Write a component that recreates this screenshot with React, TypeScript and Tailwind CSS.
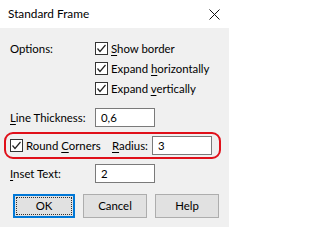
import React from "react";

const Check = () => (
  <span className="flex h-[13px] w-[13px] shrink-0 items-center justify-center border border-[#333333] bg-white">
    <svg width="11" height="11" viewBox="0 0 11 11">
      <polyline points="1.5,5.5 4,8.5 9.5,2" fill="none" stroke="#222222" strokeWidth="1.2" />
    </svg>
  </span>
);

const Field = ({ value, width = "w-[60px]" }: { value: string; width?: string }) => (
  <div className={`${width} flex h-[19px] items-center border border-[#7a7a7a] bg-white pl-[5px]`}>{value}</div>
);

const Key = ({ k }: { k: string }) => <span className="underline underline-offset-2">{k}</span>;

const App = () => {
  return (
    <div className="h-[227px] w-[229px] overflow-hidden bg-[#f0f0f0] font-['Segoe_UI','Lato',sans-serif] text-[11.4px] leading-none text-black">
      <div className="flex h-[28px] items-center justify-between bg-white pl-[8px] pr-[9px] text-[11.8px]">
        <span>Standard Frame</span>
        <svg width="11" height="11" viewBox="0 0 11 11">
          <path d="M0.5 0.5 L10.5 10.5 M10.5 0.5 L0.5 10.5" stroke="#111111" strokeWidth="1" />
        </svg>
      </div>

      <div className="pl-[10px] pt-[14px]">
        <div className="flex">
          <div className="w-[85px] pt-[1px]">Options:</div>
          <div className="flex flex-col gap-[7px]">
            <div className="flex h-[13px] items-center gap-[3px]">
              <Check />
              <span><Key k="S" />how border</span>
            </div>
            <div className="flex h-[13px] items-center gap-[3px]">
              <Check />
              <span>Expand <Key k="h" />orizontally</span>
            </div>
            <div className="flex h-[13px] items-center gap-[3px]">
              <Check />
              <span>Expand <Key k="v" />ertically</span>
            </div>
          </div>
        </div>

        <div className="mt-[13px] flex h-[19px] items-center">
          <span className="w-[85px]"><Key k="L" />ine Thickness:</span>
          <Field value="0,6" />
        </div>

        <div className="-ml-[6px] mt-[5px] flex h-[27px] w-[217px] items-center rounded-[9px] border-2 border-[#e0101a] pl-[4px]">
          <Check />
          <span className="ml-[3px] w-[86px]">Round <Key k="C" />orners</span>
          <span className="w-[40px]"><Key k="R" />adius:</span>
          <Field value="3" />
        </div>

        <div className="mt-[5px] flex h-[19px] items-center">
          <span className="w-[85px]"><Key k="I" />nset Text:</span>
          <Field value="2" />
        </div>

        <div className="ml-[3px] mt-[11px] flex gap-[8px]">
          <button className="flex h-[24px] w-[62px] items-center justify-center border-2 border-[#0078d7] bg-[#e1e1e1] p-[1px]">
            <span className="flex h-full w-full items-center justify-center border border-dotted border-[#333333]">OK</span>
          </button>
          <button className="flex h-[24px] w-[64px] items-center justify-center border border-[#adadad] bg-[#e1e1e1]">Cancel</button>
          <button className="flex h-[24px] w-[64px] items-center justify-center border border-[#adadad] bg-[#e1e1e1]">Help</button>
        </div>
      </div>
    </div>
  );
};

export default App;
